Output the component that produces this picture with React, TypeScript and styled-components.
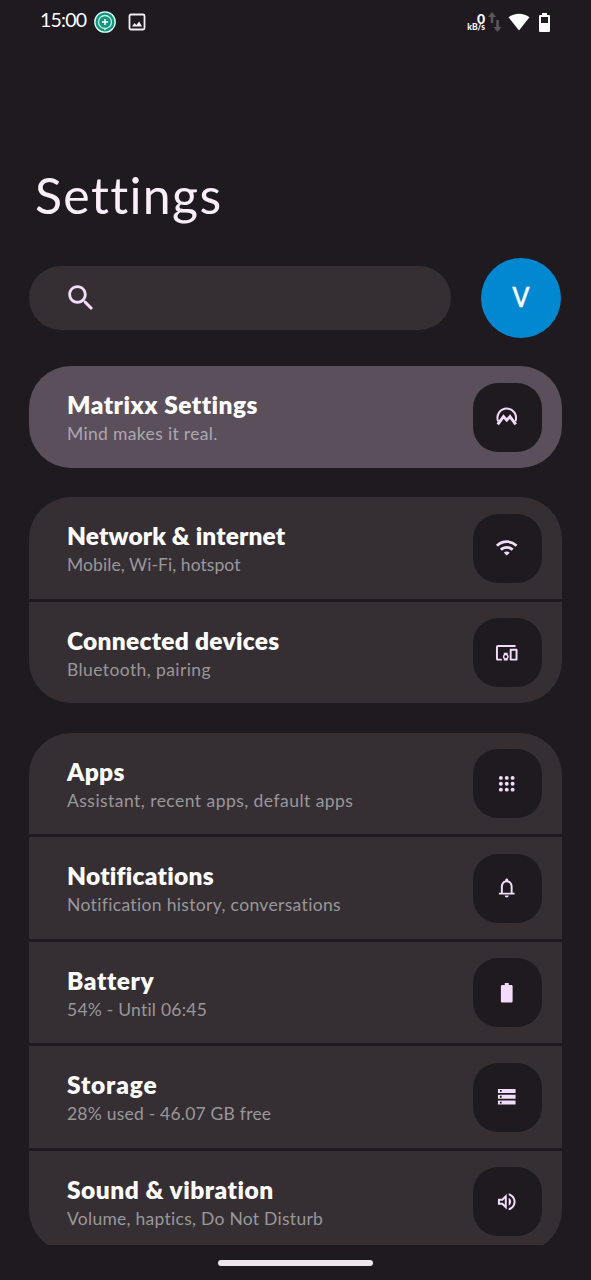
import React from "react";
import styled, { createGlobalStyle } from "styled-components";

const Global = createGlobalStyle`
  * { box-sizing: border-box; }
  html, body { margin: 0; background: #1f1a1f; }
`;

const Screen = styled.main`
  width: 591px;
  height: 1280px;
  overflow: hidden;
  display: flex;
  flex-direction: column;
  background: #1f1a1f;
  color: #fff;
  font-family: Lato, "Liberation Sans", sans-serif;
  font-variant-ligatures: none;
`;

const StatusBar = styled.header`
  height: 44px;
  flex: none;
  display: flex;
  align-items: center;
  padding: 0 41px 0 40px;
`;

const Clock = styled.span`
  width: 47px;
  font-size: 19.5px;
  line-height: 24px;
  letter-spacing: -0.75px;
  margin-top: -4px;
  white-space: nowrap;
`;

const StatusIcons = styled.div`
  display: flex;
  align-items: center;
  gap: 12px;
  margin-left: 7px;
`;

const StatusEnd = styled.div`
  display: flex;
  align-items: center;
  margin-left: auto;
`;

const NetSpeed = styled.div`
  display: flex;
  flex-direction: column;
  align-items: flex-end;
  width: 19px;
  font-weight: 900;
  white-space: nowrap;
`;

const SpeedValue = styled.span`
  font-size: 14px;
  line-height: 11px;
  height: 10px;
`;

const SpeedUnit = styled.span`
  font-size: 8.5px;
  line-height: 8px;
`;

const StatusArrows = styled.svg`
  margin-left: 3px;
`;

const StatusWifi = styled.svg`
  margin-left: 6px;
`;

const StatusBattery = styled.svg`
  margin-left: 9px;
`;

const Title = styled.h1`
  margin: 121px 0 0 35px;
  height: 60px;
  font-size: 50px;
  line-height: 60px;
  font-weight: 400;
  letter-spacing: 1.35px;
  color: #f9eef9;
`;

const SearchRow = styled.div`
  display: flex;
  align-items: center;
  justify-content: space-between;
  height: 80px;
  flex: none;
  margin: 33.3px 30px 0 29px;
`;

const SearchBar = styled.div`
  display: flex;
  align-items: center;
  width: 422px;
  height: 64px;
  padding-left: 34.5px;
  border-radius: 32px;
  background: #352f34;
`;

const Avatar = styled.div`
  width: 80px;
  height: 80px;
  border-radius: 50%;
  background: #0288d1;
  display: flex;
  align-items: center;
  justify-content: center;
  font: 400 28px/80px Roboto, sans-serif;
  -webkit-text-stroke: 0.4px #fff;
`;

const List = styled.div`
  display: flex;
  flex-direction: column;
  gap: 29.5px;
  height: 879.2px;
  flex: none;
  margin: 28px 29px 0;
  overflow: hidden;
`;

const Group = styled.section`
  display: flex;
  flex: none;
  flex-direction: column;
  gap: 3px;
  border-radius: 42px;
  overflow: hidden;
`;

const Row = styled.div<{ $accent?: boolean }>`
  display: flex;
  align-items: center;
  justify-content: space-between;
  height: 101.5px;
  padding: 0 20.5px 0 38px;
  background: ${(p) => (p.$accent ? "#5b4f5c" : "#352f34")};
`;

const Labels = styled.div`
  display: flex;
  flex-direction: column;
  padding-top: 4px;
  white-space: nowrap;
`;

const Name = styled.span<{ $track: number }>`
  font-size: 24.5px;
  line-height: 30px;
  font-weight: 800;
  letter-spacing: ${(p) => p.$track}px;
`;

const Summary = styled.span<{ $track: number; $accent?: boolean }>`
  font-size: 17.5px;
  line-height: 28px;
  letter-spacing: ${(p) => p.$track}px;
  color: ${(p) => (p.$accent ? "#ada7ae" : "#9a979a")};
`;

const IconTile = styled.div`
  width: 69px;
  height: 69px;
  display: flex;
  align-items: center;
  justify-content: center;
  border-radius: 25px;
  background: #1f1a1f;
`;

const NavArea = styled.footer`
  flex: 1;
  display: flex;
  justify-content: center;
  padding-top: 14.5px;
`;

const NavHandle = styled.div`
  width: 155px;
  height: 6px;
  border-radius: 3px;
  background: #ede6ed;
`;

const Glyph = ({ size = 23.5, children }: { size?: number; children: React.ReactNode }) => (
  <svg width={size} height={size} viewBox="0 0 24 24" fill="#f3dcfb">
    {children}
  </svg>
);

const icons: Record<string, React.ReactNode> = {
  matrixx: (
    <g fill="none" stroke="#f3dcfb">
      <path d="M3.200 16.700A9.500 9.500 0 1 1 20.800 16.700" strokeWidth="2" />
      <path d="M2.800 19.800 8.700 11.800 12 15.500 15.300 11.800 21.200 19.800" strokeWidth="2.900" />
    </g>
  ),
  wifi: (
    <path d="M1 9l2 2c4.970-4.970 13.030-4.970 18 0l2-2C16.930 2.930 7.080 2.930 1 9zm8 8l3 3 3-3c-1.650-1.660-4.340-1.660-6 0zm-4-4l2 2c2.760-2.760 7.240-2.760 10 0l2-2C15.140 9.140 8.870 9.140 5 13z" />
  ),
  devices: (
    <path d="M3 6h18V4H3c-1.100 0-2 .9-2 2v12c0 1.100.9 2 2 2h4v-2H3V6zm10 6H9v1.780c-.61.55-1 1.330-1 2.220s.39 1.670 1 2.220V20h4v-1.780c.61-.55 1-1.340 1-2.220s-.39-1.670-1-2.220V12zm-2 5.500c-.83 0-1.500-.67-1.500-1.500s.67-1.500 1.500-1.500 1.500.67 1.500 1.500-.67 1.500-1.500 1.500zM22 8h-6c-.5 0-1 .5-1 1v10c0 .5.5 1 1 1h6c.5 0 1-.5 1-1V9c0-.5-.5-1-1-1zm-1 10h-4v-8h4v8z" />
  ),
  apps: (
    <g>
      {[6, 12, 18].map((y) => [6, 12, 18].map((x) => <circle key={`${x}-${y}`} cx={x} cy={y} r="2" />))}
    </g>
  ),
  bell: (
    <path d="M18 17v-6c0-3.070-1.630-5.640-4.500-6.320V4c0-.83-.67-1.500-1.500-1.500s-1.500.67-1.500 1.500v.68C7.640 5.360 6 7.920 6 11v6H4v2h16v-2h-2zm-2 0H8v-6c0-2.480 1.510-4.500 4-4.500s4 2.020 4 4.500v6zm-4 5c1.100 0 2-.9 2-2h-4c0 1.100.9 2 2 2z" />
  ),
  battery: <path d="M16.700 4H14V2h-4v2H7.300C6.600 4 6 4.600 6 5.300v15.400c0 .7.6 1.300 1.300 1.300h9.400c.7 0 1.300-.6 1.300-1.300V5.300c0-.7-.6-1.300-1.300-1.300z" />,
  storage: (
    <path fillRule="evenodd" d="M3 4h18v4.200H3zM5 5.200v1.800h1.800V5.200zM3 10h18v4H3zM5 11.100v1.800h1.800v-1.800zM3 15.800h18V20H3zM5 17v1.800h1.800V17z" />
  ),
  volume: (
    <path d="M3 9v6h4l5 5V4L7 9H3zm7-.17v6.340L7.830 13H5v-2h2.830L10 8.830zM16.500 12c0-1.770-1.020-3.290-2.500-4.030v8.050c1.480-.73 2.500-2.250 2.500-4.020zM14 3.230v2.060c2.890.86 5 3.540 5 6.710s-2.110 5.850-5 6.710v2.060c4.010-.91 7-4.490 7-8.770s-2.990-7.860-7-8.770z" />
  ),
};

type Item = { icon: string; name: string; summary: string; nt: number; st: number; accent?: boolean };

const groups: Item[][] = [
  [{ icon: "matrixx", name: "Matrixx Settings", summary: "Mind makes it real.", nt: 0.48, st: 0.34, accent: true }],
  [
    { icon: "wifi", name: "Network & internet", summary: "Mobile, Wi-Fi, hotspot", nt: 0.12, st: 0.07 },
    { icon: "devices", name: "Connected devices", summary: "Bluetooth, pairing", nt: 0.27, st: 0.4 },
  ],
  [
    { icon: "apps", name: "Apps", summary: "Assistant, recent apps, default apps", nt: 0.3, st: 0.46 },
    { icon: "bell", name: "Notifications", summary: "Notification history, conversations", nt: 0.25, st: 0.34 },
    { icon: "battery", name: "Battery", summary: "54% - Until 06:45", nt: 0.6, st: 0.23 },
    { icon: "storage", name: "Storage", summary: "28% used - 46.07 GB free", nt: 0.85, st: 0.22 },
    { icon: "volume", name: "Sound & vibration", summary: "Volume, haptics, Do Not Disturb", nt: 0.5, st: 0.27 },
  ],
];

export default function App() {
  return (
    <Screen>
      <Global />
      <StatusBar>
        <Clock>15:00</Clock>
        <StatusIcons>
          <svg width="22" height="22" viewBox="0 0 22 22" fill="none">
            <circle cx="11" cy="11" r="10.200" fill="#12967f" stroke="#e6fffa" strokeWidth="1.300" />
            <circle cx="11" cy="11" r="6.500" stroke="#c5eee5" strokeWidth="1.300" />
            <path d="M11 8v6M8 11h6" stroke="#fff" strokeWidth="1.500" />
            <path d="M9.500 17.500 11 19.500 12.500 17.500" fill="#c5eee5" />
          </svg>
          <svg width="18" height="18" viewBox="0 0 18 18" fill="none">
            <rect x="1.500" y="1.500" width="15" height="15" rx="1.500" stroke="#f3eef3" strokeWidth="1.800" />
            <path d="M4 13.500 6.500 10 8.300 12 11.200 8.500 14 13.500z" fill="#f3eef3" />
          </svg>
        </StatusIcons>
        <StatusEnd>
          <NetSpeed>
            <SpeedValue>0</SpeedValue>
            <SpeedUnit>kB/s</SpeedUnit>
          </NetSpeed>
          <StatusArrows width="14" height="20" viewBox="0 0 14 20" fill="#5b565b">
            <path d="M4 0 8 5H5.200v6H2.800V5H0zM9.500 20 13.500 15h-2.700V8H8.300v7H5.500z" />
          </StatusArrows>
          <StatusWifi width="22" height="18" viewBox="0 0 22 18" fill="#fff">
            <path d="M.5 4.300C6.500-.6 15.500-.6 21.500 4.300L11 17.500z" />
          </StatusWifi>
          <StatusBattery width="11" height="19" viewBox="0 0 11 19" fill="#fff">
            <path fillRule="evenodd" d="M3 0h5v2h2q1 0 1 1v15q0 1-1 1H1q-1 0-1-1V3q0-1 1-1h2zM2 4v6h7V4z" />
          </StatusBattery>
        </StatusEnd>
      </StatusBar>
      <Title>Settings</Title>
      <SearchRow>
        <SearchBar>
          <svg width="34" height="34" viewBox="0 0 24 24" fill="#f3dcfb">
            <path d="M15.500 14h-.79l-.28-.27C15.410 12.590 16 11.110 16 9.500 16 5.910 13.090 3 9.500 3S3 5.910 3 9.500 5.910 16 9.500 16c1.610 0 3.090-.59 4.230-1.570l.27.28v.79l5 4.990L20.490 19l-4.990-5zm-6 0C7.010 14 5 11.990 5 9.500S7.010 5 9.500 5 14 7.010 14 9.500 11.990 14 9.500 14z" />
          </svg>
        </SearchBar>
        <Avatar>V</Avatar>
      </SearchRow>
      <List>
        {groups.map((group, i) => (
          <Group key={i}>
            {group.map((item) => (
              <Row key={item.name} $accent={item.accent}>
                <Labels>
                  <Name $track={item.nt}>{item.name}</Name>
                  <Summary $track={item.st} $accent={item.accent}>{item.summary}</Summary>
                </Labels>
                <IconTile>
                  <Glyph>{icons[item.icon]}</Glyph>
                </IconTile>
              </Row>
            ))}
          </Group>
        ))}
      </List>
      <NavArea>
        <NavHandle />
      </NavArea>
    </Screen>
  );
}
